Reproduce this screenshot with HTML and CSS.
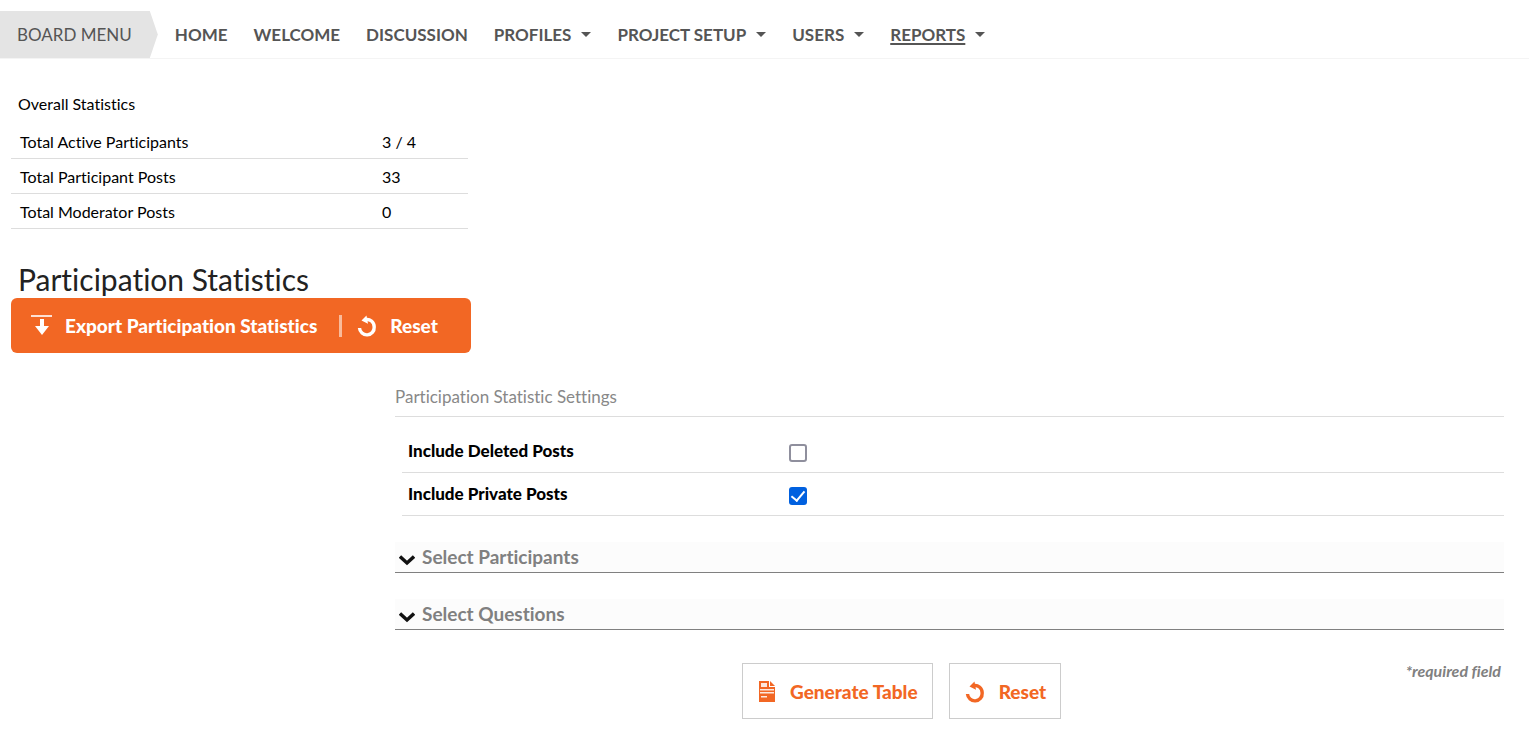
FILE: index.html
```html
<!DOCTYPE html>
<html lang="en">
<head>
<meta charset="utf-8">
<title>Participation Statistics</title>
<link rel="stylesheet" href="styles.css">
</head>
<body>
<svg class="defs" width="0" height="0" aria-hidden="true">
  <symbol id="reset" viewBox="0 0 20 22">
    <path d="M8 4.800C13 3.500 17.200 7 17.200 12A7.300 7.300 0 0 1 2.500 13" fill="none" stroke="currentColor" stroke-width="3.400"/>
    <path d="M4.500 5.400 9.500.6 11 8.800z" fill="currentColor"/>
  </symbol>
</svg>
<nav class="nav">
  <span class="nav-title">BOARD MENU</span>
  <a class="nav-link" href="#">HOME</a>
  <a class="nav-link" href="#">WELCOME</a>
  <a class="nav-link" href="#">DISCUSSION</a>
  <a class="nav-link has-menu" href="#"><span>PROFILES</span></a>
  <a class="nav-link has-menu" href="#"><span>PROJECT SETUP</span></a>
  <a class="nav-link has-menu" href="#"><span>USERS</span></a>
  <a class="nav-link has-menu current" href="#"><span>REPORTS</span></a>
</nav>
<main class="main">
  <table class="stats">
    <caption>Overall Statistics</caption>
    <tbody>
      <tr><th scope="row">Total Active Participants</th><td>3 / 4</td></tr>
      <tr><th scope="row">Total Participant Posts</th><td>33</td></tr>
      <tr><th scope="row">Total Moderator Posts</th><td>0</td></tr>
    </tbody>
  </table>
  <h1 class="title">Participation Statistics</h1>
  <div class="toolbar">
    <button class="tool" type="button">
      <svg width="22" height="22" viewBox="0 0 22 22" aria-hidden="true"><path d="M0 0h21v2H0z" fill="#fff" opacity=".8"/><path d="M9 4h4v7h5l-7 9-7-9h5z" fill="#fff"/></svg>
      Export Participation Statistics
    </button>
    <button class="tool tool-reset" type="button">
      <svg width="20" height="22" aria-hidden="true"><use href="#reset"/></svg>
      Reset
    </button>
  </div>
  <form class="settings">
    <h2 class="legend">Participation Statistic Settings</h2>
    <div class="options">
      <div class="option"><label for="deleted">Include Deleted Posts</label><input class="check" type="checkbox" id="deleted"></div>
      <div class="option"><label for="private">Include Private Posts</label><input class="check" type="checkbox" id="private" checked></div>
    </div>
    <button class="section" type="button">
      <svg width="16" height="11" viewBox="0 0 16 11" aria-hidden="true"><path d="M1 1.500 8 8 15 1.500" fill="none" stroke="#111" stroke-width="3.400"/></svg>
      Select Participants
    </button>
    <button class="section" type="button">
      <svg width="16" height="11" viewBox="0 0 16 11" aria-hidden="true"><path d="M1 1.500 8 8 15 1.500" fill="none" stroke="#111" stroke-width="3.400"/></svg>
      Select Questions
    </button>
    <div class="footer">
      <div class="actions">
        <button class="action" type="submit">
          <svg width="18" height="22" viewBox="0 0 18 22" aria-hidden="true"><path d="M1 0h10v6h6v15H1z" fill="#f26724"/><path d="M12 0l5 5h-5z" fill="#f26724"/><path d="M3 2h6v4H3zM2 8h14v1.500H2zM2 11h14v1.500H2zM3 15h6v1.500H3z" fill="#fff" opacity=".85"/></svg>
          Generate Table
        </button>
        <button class="action" type="reset">
          <svg width="20" height="22" aria-hidden="true"><use href="#reset"/></svg>
          Reset
        </button>
      </div>
      <p class="required">*required field</p>
    </div>
  </form>
</main>
</body>
</html>
```
FILE: styles.css
```css
* { box-sizing: border-box; }
body { margin: 0; background: #fff; color: #000; font: 16px/20px Lato, "Liberation Sans", sans-serif; font-variant-ligatures: none; }
button { margin: 0; border: 0; font: inherit; font-variant-ligatures: none; color: inherit; background: none; cursor: pointer; }
.defs { position: absolute; }
.nav { display: flex; gap: 26px; align-items: center; margin-top: 11px; border-bottom: 1px solid #f4f4f4; color: #555; font-size: 17px; }
.nav-title { padding: 0 26px 0 17px; margin-right: -9px; line-height: 47px; background: #e4e4e4; clip-path: polygon(0 0, calc(100% - 8px) 0, 100% 50%, calc(100% - 8px) 100%, 0 100%); }
.nav-link { display: flex; align-items: center; gap: 10px; color: #555; font-weight: 700; text-decoration: none; }
.has-menu::after { content: ""; border: 5px solid transparent; border-top-color: #555; border-bottom: 0; }
.current span { text-decoration: underline; text-decoration-thickness: 2px; text-underline-offset: 2px; }
.main { padding: 35px 25px 15px 11px; }
.stats { width: 457px; border-collapse: collapse; table-layout: fixed; }
.stats caption { padding: 0 7px 9px; text-align: left; }
.stats th, .stats td { height: 35px; padding: 3px 9px 0; border-bottom: 1px solid #ddd; font-weight: 400; text-align: left; }
.stats th { width: 362px; }
.title { margin: 31px 0 0 7px; color: #222; font-size: 30px; line-height: 38px; font-weight: 400; }
.toolbar { display: inline-flex; align-items: center; height: 55px; padding: 2px 33px 0 20px; border-radius: 6px; background: #f26724; color: #fff; vertical-align: top; }
.tool { display: flex; align-items: center; gap: 12px; padding: 0; font-size: 19px; line-height: 22px; font-weight: 900; }
.tool-reset { gap: 13px; margin-left: 22px; padding-left: 15px; border-left: 3px solid #f9bb9b; }
.settings { margin: 34px 0 0 384px; }
.legend { margin: 0; padding-bottom: 9px; border-bottom: 1px solid #ddd; color: #888; font-size: 17px; font-weight: 400; line-height: 20px; }
.options { margin: 13px 0 26px 7px; }
.option { display: grid; grid-template-columns: 381px auto; align-items: center; justify-content: start; height: 43px; padding-left: 6px; border-bottom: 1px solid #ddd; font-size: 17px; font-weight: 900; }
.check { width: 18px; height: 18px; margin: 4px 0 0; appearance: none; border: 2px solid #8f8f9d; border-radius: 3px; background: #fff; }
.check:checked { border: 0; background: #0060df; display: grid; place-items: center; }
.check:checked::before { content: ""; width: 6px; height: 11px; margin-bottom: 3px; border: solid #fff; border-width: 0 2px 2px 0; transform: rotate(40deg); }
.section { display: flex; align-items: center; gap: 7px; width: 100%; height: 31px; margin-bottom: 26px; padding: 0 4px; border-bottom: 1px solid #808080; background: #fcfcfc; color: #808080; font-size: 19px; font-weight: 700; }
.section svg { margin-top: 8px; }
.footer { display: grid; grid-template-columns: 347px 1fr auto; align-items: start; padding-top: 7px; }
.actions { display: flex; grid-column: 2; gap: 16px; }
.action { display: flex; align-items: center; gap: 14px; height: 56px; padding: 2px 14px 0 15px; border: 1px solid #ccc; background: #fff; color: #f26724; font-size: 19px; font-weight: 900; }
.required { margin: 0; padding: 0 3px; color: #808080; font-size: 16px; line-height: 16px; font-style: italic; font-weight: 700; }
```
